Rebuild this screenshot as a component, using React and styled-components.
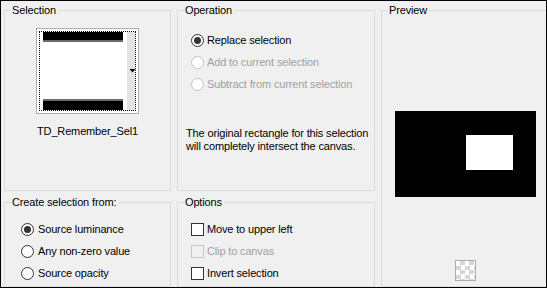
import React from 'react';
import styled, { createGlobalStyle } from 'styled-components';

const Global = createGlobalStyle`
  html, body { margin: 0; padding: 0; background: #f0f0f0; }
  body {
    font-family: "Liberation Sans", Arial, sans-serif;
    font-size: 11px;
    letter-spacing: -0.15px;
    color: #000;
  }
`;

const Dialog = styled.div`
  box-sizing: border-box;
  width: 547px;
  height: 288px;
  overflow: hidden;
  background: #f0f0f0;
  border: 1px solid #000;
  padding: 3px 0 0 3px;
  display: grid;
  grid-template-columns: 167px 198px 166px;
  grid-template-rows: 187px 91px;
  column-gap: 6px;
  row-gap: 5px;
  grid-template-areas:
    "sel op prev"
    "create opts prev";
`;

const Group = styled.fieldset`
  grid-area: ${(p) => p.$area};
  margin: 0;
  padding: 0;
  min-width: 0;
  border: 1px solid #dcdcdc;
  display: flex;
  flex-direction: column;
  margin-left: ${(p) => p.$shift || 0}px;
`;

const Legend = styled.legend`
  margin-left: 6px;
  padding: 0 2px 0 1px;
  line-height: 13px;
  font-size: 11px;
`;

const ThumbBox = styled.div`
  align-self: center;
  margin-top: 11px;
  width: 97px;
  height: 80px;
  padding: 2px;
  border: 1px solid #adadad;
  background: #fff;
`;

const FocusRect = styled.div`
  box-sizing: border-box;
  width: 97px;
  height: 80px;
  border: 1px dotted #000;
  svg { display: block; }
`;

const Caption = styled.div`
  text-align: center;
  margin-top: 11px;
  line-height: 13px;
`;

const OptionList = styled.div`
  display: flex;
  flex-direction: column;
  padding: ${(p) => p.$pad};
`;

const OptionRow = styled.label`
  display: flex;
  align-items: center;
  height: 22px;
  gap: ${(p) => p.$gap || 4}px;
  color: ${(p) => (p.$disabled ? '#a0a0a0' : '#000')};
  line-height: 13px;
  white-space: nowrap;
`;

const RadioMark = styled.span`
  box-sizing: border-box;
  width: 13px;
  height: 13px;
  border-radius: 50%;
  border: 1px solid ${(p) => (p.$disabled ? '#c4c4c4' : '#333')};
  background: #fff;
  display: flex;
  align-items: center;
  justify-content: center;
  flex: none;
  &::after {
    content: '';
    display: ${(p) => (p.$checked ? 'block' : 'none')};
    width: 7px;
    height: 7px;
    border-radius: 50%;
    background: #333;
  }
`;

const CheckMark = styled.span`
  box-sizing: border-box;
  width: 13px;
  height: 13px;
  border: 1px solid ${(p) => (p.$disabled ? '#c8c8c8' : '#333')};
  background: ${(p) => (p.$disabled ? '#f0f0f0' : '#fff')};
  flex: none;
`;

const Note = styled.p`
  margin: 32px 0 0 0;
  padding: 0 0 0 8px;
  line-height: 13px;
  white-space: nowrap;
`;

const PreviewBody = styled.div`
  display: flex;
  flex-direction: column;
  align-items: center;
  padding-top: 94px;
`;

const PreviewCanvas = styled.div`
  width: 141px;
  height: 86px;
  margin-left: 3px;
  background: #000;
  svg { display: block; }
`;

const CheckerIcon = styled.div`
  box-sizing: border-box;
  width: 21px;
  height: 21px;
  margin-top: 63px;
  margin-left: 3px;
  border: 1px solid #adadad;
  background: repeating-conic-gradient(#d6d6d6 0 25%, #fff 0 50%) 0 0 / 9px 9px;
`;

function Radio({ label, checked, disabled, gap }) {
  return (
    <OptionRow $disabled={disabled} $gap={gap}>
      <RadioMark $checked={checked} $disabled={disabled} />
      <span>{label}</span>
    </OptionRow>
  );
}

function Check({ label, disabled, gap }) {
  return (
    <OptionRow $disabled={disabled} $gap={gap}>
      <CheckMark $disabled={disabled} />
      <span>{label}</span>
    </OptionRow>
  );
}

function SelectionThumb() {
  return (
    <ThumbBox>
      <FocusRect>
        <svg width="95" height="78" viewBox="0 0 95 78">
          <rect x="87" y="0" width="8" height="78" fill="#e3e3e3" />
          <rect x="3" y="0" width="80" height="8" fill="#000" />
          <rect x="3" y="8" width="80" height="2" fill="#6a6a6a" />
          <rect x="3" y="67" width="80" height="2" fill="#6a6a6a" />
          <rect x="3" y="69" width="80" height="9" fill="#000" />
          <rect x="90" y="37" width="5" height="1" fill="#000" />
          <polygon points="90.5,38 94.5,38 92.5,40.5" fill="#000" />
        </svg>
      </FocusRect>
    </ThumbBox>
  );
}

export default function App() {
  return (
    <>
      <Global />
      <Dialog>
        <Group $area="sel">
          <Legend>Selection</Legend>
          <SelectionThumb />
          <Caption>TD_Remember_Sel1</Caption>
        </Group>

        <Group $area="op">
          <Legend>Operation</Legend>
          <OptionList $pad="12px 0 0 13px">
            <Radio label="Replace selection" checked gap={3} />
            <Radio label="Add to current selection" disabled gap={3} />
            <Radio label="Subtract from current selection" disabled gap={3} />
          </OptionList>
          <Note>
            The original rectangle for this selection
            <br />
            will completely intersect the canvas.
          </Note>
        </Group>

        <Group $area="prev">
          <Legend>Preview</Legend>
          <PreviewBody>
            <PreviewCanvas>
              <svg width="141" height="86" viewBox="0 0 141 86">
                <rect x="71" y="24" width="47" height="35" fill="#fff" />
              </svg>
            </PreviewCanvas>
            <CheckerIcon />
          </PreviewBody>
        </Group>

        <Group $area="create">
          <Legend>Create selection from:</Legend>
          <OptionList $pad="9px 0 0 16px">
            <Radio label="Source luminance" checked />
            <Radio label="Any non-zero value" />
            <Radio label="Source opacity" />
          </OptionList>
        </Group>

        <Group $area="opts">
          <Legend>Options</Legend>
          <OptionList $pad="9px 0 0 13px">
            <Check label="Move to upper left" gap={3} />
            <Check label="Clip to canvas" disabled gap={3} />
            <Check label="Invert selection" gap={3} />
          </OptionList>
        </Group>
      </Dialog>
    </>
  );
}
